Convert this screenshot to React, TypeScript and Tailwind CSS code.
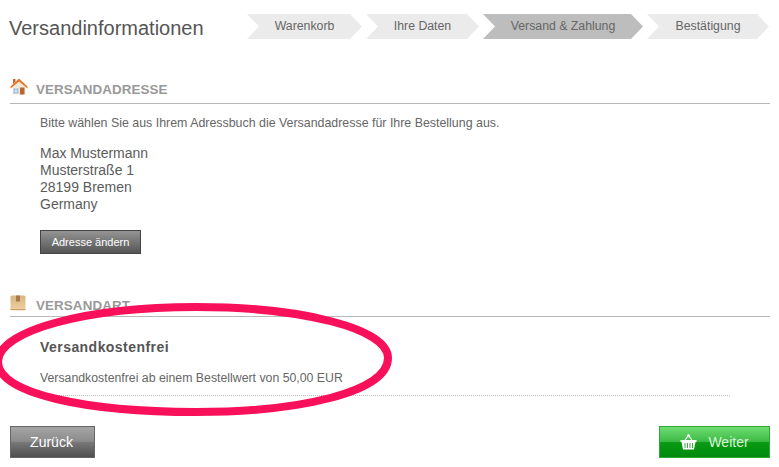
const steps = [
  { label: "Warenkorb", width: "w-[115px]", active: false },
  { label: "Ihre Daten", width: "w-[113px]", active: false },
  { label: "Versand & Zahlung", width: "w-[160px]", active: true },
  { label: "Bestätigung", width: "w-[122px]", active: false },
];

function HouseIcon() {
  return (
    <svg width="18" height="17" viewBox="0 0 18 17">
      <path d="M2.500 8 9 3l6.500 5v8.500h-13z" fill="#f3e9da" />
      <path d="M0.500 8.500 9 0.500l8.500 8v2L9 3.500 0.500 10.500z" fill="#e2762a" />
      <path d="M3 1h2.500v2.500L3 6z" fill="#c9642a" />
      <path d="M3.500 10.500h5V15.500h-5z" fill="#8fb4dc" />
      <path d="M6 10.500v5M3.500 13h5" stroke="#fff" strokeWidth="0.700" />
      <path d="M10 9.500h4.500v7H10z" fill="#b5692f" />
    </svg>
  );
}

function BoxIcon() {
  return (
    <svg width="16" height="16" viewBox="0 0 16 16">
      <defs>
        <linearGradient id="box" x1="0" y1="0" x2="0" y2="1">
          <stop offset="0" stopColor="#d9b484" />
          <stop offset="1" stopColor="#f0cfa0" />
        </linearGradient>
      </defs>
      <rect x="0.500" y="0.500" width="15" height="15" rx="1.500" fill="url(#box)" />
      <rect x="6" y="0.500" width="4" height="6" fill="#a9794a" />
      <path d="M0.500 14.500h15" stroke="#c9a070" />
    </svg>
  );
}

function BasketIcon() {
  return (
    <svg width="17" height="16" viewBox="0 0 17 16" fill="#fff">
      <path d="M5 6 8.500 1.500 12 6" fill="none" stroke="#fff" strokeWidth="1.200" />
      <circle cx="8.500" cy="1.500" r="1.200" />
      <path d="M0.500 6h16v2H15.500l-1.500 7.500H3L1.500 8H0.500z" />
      <path d="M5 9v5M7.500 9v5M10 9v5M12.500 9v5" stroke="#22a32a" strokeWidth="0.900" />
    </svg>
  );
}

function SectionHeading({ icon, title, className }: { icon: React.ReactNode; title: string; className: string }) {
  return (
    <div className={`flex items-end border-b border-[#b8b8b8] ${className}`}>
      <div className="w-[26px] flex items-center mb-[3px]">{icon}</div>
      <h2 className="text-[13.4px] leading-[16px] font-bold text-[#999] tracking-[0.1px]">{title}</h2>
    </div>
  );
}

export default function App() {
  return (
    <div className="relative w-[779px] h-[467px] overflow-hidden bg-white pl-[10px] pr-[9px] font-['Liberation_Sans',Arial,sans-serif] text-[#666]">
      {/* 헤더 */}
      <div className="flex items-start h-[82px] pt-[14px]">
        <h1 className="w-[237px] -ml-[1px] mr-[1px] pt-[1px] text-[20px] leading-[27px] text-[#555]">Versandinformationen</h1>
        <div className="flex gap-[4px]">
          {steps.map((step) => (
            <div
              key={step.label}
              className={`${step.width} h-[25px] flex items-center justify-center pb-[1px] text-[12.3px] [clip-path:polygon(0_0,calc(100%-12px)_0,100%_50%,calc(100%-12px)_100%,0_100%,12px_50%)] ${
                step.active ? "bg-[#bdbdbd]" : "bg-[#ebebeb]"
              }`}
            >
              {step.label}
            </div>
          ))}
        </div>
      </div>

      {/* 배송 주소 */}
      <SectionHeading icon={<HouseIcon />} title="VERSANDADRESSE" className="h-[22px] pb-[5px]" />
      <div className="pl-[30px]">
        <p className="mt-[12px] text-[12.4px] leading-[14px]">
          Bitte wählen Sie aus Ihrem Adressbuch die Versandadresse für Ihre Bestellung aus.
        </p>
        <div className="mt-[15px] text-[14px] leading-[17px] text-[#5c5c5c]">
          <div>Max Mustermann</div>
          <div>Musterstraße 1</div>
          <div>28199 Bremen</div>
          <div>Germany</div>
        </div>
        <button className="mt-[17px] block w-[101px] h-[24px] border border-[#444] bg-gradient-to-b from-[#959595] to-[#555] text-[11px] text-white">
          Adresse ändern
        </button>
      </div>

      {/* 배송 방법 */}
      <div className="mt-[42px]">
        <SectionHeading icon={<BoxIcon />} title="VERSANDART" className="h-[21px] pb-[2px]" />
      </div>
      <div className="pl-[30px] pr-[40px]">
        <h3 className="mt-[22px] text-[14px] leading-[16px] font-bold tracking-[0.45px] text-[#555]">Versandkostenfrei</h3>
        <p className="mt-[16px] text-[12.3px] leading-[14px]">Versandkostenfrei ab einem Bestellwert von 50,00 EUR</p>
        <div className="mt-[10px] border-b border-dotted border-[#bbb]" />
      </div>

      {/* 하단 버튼 */}
      <div className="mt-[30px] flex justify-between">
        <button className="w-[85px] h-[32px] border border-[#666] bg-[linear-gradient(#a5a5a5_0%,#8b8b8b_48%,#777_52%,#4e4e4e_100%)] text-[14px] text-white pr-[2px]">
          Zurück
        </button>
        <button className="w-[111px] h-[32px] flex items-center justify-center gap-[11px] border border-[#2fa836] bg-[linear-gradient(#6fdc73_0%,#3dbb45_48%,#0a9a14_52%,#008a0c_100%)] text-[14px] text-[#d8f5d8]">
          <BasketIcon />
          Weiter
        </button>
      </div>

      {/* 빨간 강조 타원 */}
      <svg className="absolute left-0 top-[296px] pointer-events-none" width="400" height="130" viewBox="0 0 400 130">
        <path
          d="M-2 66C-2 34 88 11 196 11C300 11 388 32 388 62C388 96 300 116 196 116C88 116 -2 98 -2 66Z"
          fill="none"
          stroke="#f8115a"
          strokeWidth="8"
        />
      </svg>
    </div>
  );
}
